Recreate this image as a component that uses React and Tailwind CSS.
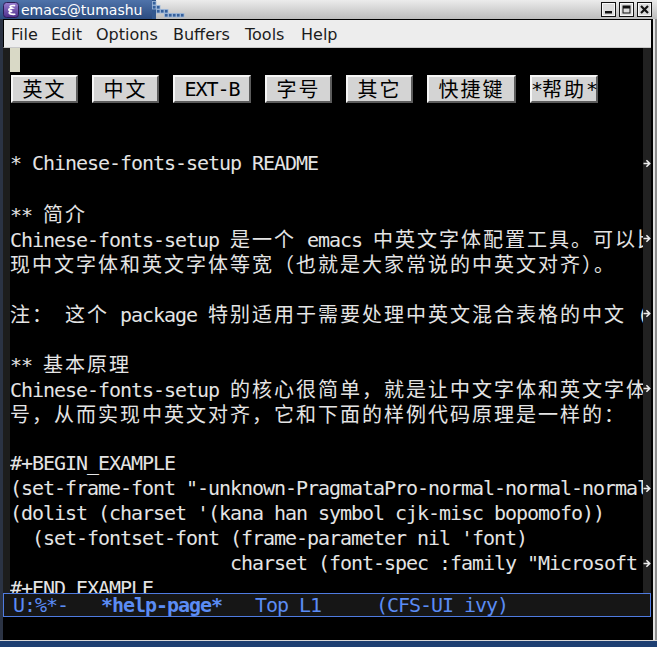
import React from "react";

const CJK = /([\u2E80-\u9FFF\u3000-\u303F\uFF00-\uFFEF]+)/;

// ascii cells are 11px, CJK cells are 22px (emacs double-width)
function Txt({ s }) {
  return s.split(CJK).map((part, i) =>
    i % 2 === 1 ? (
      <span key={i} className="font-['Noto_Sans_CJK_SC',sans-serif] tracking-[2px]">
        {part}
      </span>
    ) : (
      <span key={i}>{part}</span>
    )
  );
}

const lines = [
  { t: "* Chinese-fonts-setup README" + " ".repeat(40) + ":README:", arrow: true },
  { t: "" },
  { t: "** 简介" },
  { t: "Chinese-fonts-setup 是一个 emacs 中英文字体配置工具。可以比较方便的实", arrow: true },
  { t: "现中文字体和英文字体等宽（也就是大家常说的中英文对齐）。" },
  { t: "" },
  { t: "注： 这个 package 特别适用于需要处理中英文混合表格的中文 (org-mode) 用户。", arrow: true },
  { t: "" },
  { t: "** 基本原理" },
  { t: "Chinese-fonts-setup 的核心很简单，就是让中文字体和英文字体使用不同的字", arrow: true },
  { t: "号，从而实现中英文对齐，它和下面的样例代码原理是一样的：" },
  { t: "" },
  { t: "#+BEGIN_EXAMPLE" },
  { t: '(set-frame-font "-unknown-PragmataPro-normal-normal-normal-*-12-*-*-*-m-0-iso10646-1")', arrow: true },
  { t: "(dolist (charset '(kana han symbol cjk-misc bopomofo))" },
  { t: "  (set-fontset-font (frame-parameter nil 'font)" },
  { t: '                    charset (font-spec :family "Microsoft Yahei" :size 16)))', arrow: true },
  { t: "#+END_EXAMPLE" },
];

const buttons = [
  { label: "英文", w: "w-[67px]" },
  { label: "中文", w: "w-[67px]" },
  { label: "EXT-B", w: "w-[78px]" },
  { label: "字号", w: "w-[67px]" },
  { label: "其它", w: "w-[67px]" },
  { label: "快捷键", w: "w-[89px]" },
  { label: "*帮助*", w: "w-[68px]" },
];

const menu = [
  { label: "File", w: "w-[40px]" },
  { label: "Edit", w: "w-[45px]" },
  { label: "Options", w: "w-[77px]" },
  { label: "Buffers", w: "w-[72px]" },
  { label: "Tools", w: "w-[56px]" },
  { label: "Help", w: "" },
];

function EmacsIcon() {
  return (
    <svg width="16" height="16" viewBox="0 0 16 16" className="shrink-0">
      <defs>
        <linearGradient id="eg" x1="0" y1="0" x2="0" y2="1">
          <stop offset="0" stopColor="#9a7fd0" />
          <stop offset="1" stopColor="#4d2f8c" />
        </linearGradient>
      </defs>
      <rect x="0.5" y="0.5" width="15" height="15" rx="3" fill="url(#eg)" stroke="#2c1d55" />
      <path
        d="M11.5 3.6C7.5 3.2 5.2 4.6 9 6.1C4.8 6.8 4.6 8.6 9.2 9.1C4.4 10 5.2 12.6 11.8 12.3"
        fill="none"
        stroke="#fff"
        strokeWidth="1.6"
        strokeLinecap="round"
      />
    </svg>
  );
}

function Steps() {
  const sq = [
    [0, 1], [0, 5], [4, 5], [4, 9], [8, 9], [12, 9], [12, 13], [16, 13], [20, 13], [24, 13], [28, 13],
  ];
  return (
    <svg width="36" height="19" viewBox="0 0 36 19" className="shrink-0">
      <rect x="0" y="0" width="4" height="19" fill="#34598f" />
      {sq.map(([x, y], i) => (
        <rect key={i} x={x + 0.5} y={y + 0.5} width="3.5" height="3.5" fill="#35609c" stroke="#9fb8da" strokeWidth="0.8" />
      ))}
    </svg>
  );
}

function WinButton({ kind }) {
  return (
    <svg width="15" height="15" viewBox="0 0 15 15" className="shrink-0">
      <rect x="0.5" y="0.5" width="14" height="14" fill="#dcdcdc" stroke="#111" />
      <rect x="1.5" y="1.5" width="12" height="12" fill="none" stroke="#f7f7f7" />
      {kind === "min" && <rect x="4" y="9" width="7" height="2.5" fill="#111" />}
      {kind === "max" && (
        <g>
          <rect x="4" y="4" width="7" height="7" fill="none" stroke="#111" />
          <rect x="4" y="4" width="7" height="2.5" fill="#111" />
        </g>
      )}
      {kind === "close" && (
        <path d="M4 4L11 11M11 4L4 11" stroke="#111" strokeWidth="2.2" />
      )}
    </svg>
  );
}

function FringeArrow() {
  return (
    <svg width="8" height="9" viewBox="0 0 8 9">
      <path d="M0.5 4.5H6M3.4 1.2L6.7 4.5L3.4 7.8" fill="none" stroke="#ececec" strokeWidth="1.6" />
    </svg>
  );
}

export default function App() {
  return (
    <div className="w-[657px] h-[647px] overflow-hidden flex flex-col bg-[#2b3344] font-['DejaVu_Sans',sans-serif]">
      {/* title bar */}
      <div className="h-[19px] flex shrink-0">
        <div className="w-[152px] shrink-0 flex items-center gap-[2px] pl-[3px] bg-gradient-to-b from-[#4f73aa] to-[#2c4c80]">
          <EmacsIcon />
          <span className="text-white text-[14px] leading-none whitespace-nowrap">emacs@tumashu</span>
        </div>
        <div className="flex-1 min-w-0 flex items-center justify-end bg-gradient-to-b from-[#ececec] to-[#bcbcbc]">
          <div className="mr-auto">
            <Steps />
          </div>
          <div className="flex gap-[3px] pr-[5px]">
            <WinButton kind="min" />
            <WinButton kind="max" />
            <WinButton kind="close" />
          </div>
        </div>
      </div>

      {/* frame */}
      <div className="h-[621px] flex shrink-0">
        <div className="w-[3px] shrink-0 bg-[#2b3344]" />
        <div className="flex-1 min-w-0 flex flex-col border-t border-black">
          {/* menu bar */}
          <div className="h-[28px] shrink-0 bg-[#ededed] border-b border-l border-[#c8c8c8] border-l-black flex items-center pt-[3px] pl-[7px] text-[16px] text-[#1c1c1c]">
            {menu.map((m) => (
              <span key={m.label} className={`${m.w} shrink-0`}>
                {m.label}
              </span>
            ))}
          </div>

          {/* editor */}
          <div className="h-[545px] shrink-0 flex overflow-hidden font-['DejaVu_Sans_Mono',monospace] text-[20px] tracking-[-1.04px] text-[#e4e4e4]">
            <div className="w-[7px] shrink-0 bg-[#1d1d1d]" />
            <div className="flex-1 min-w-0 bg-black overflow-hidden">
              <div className="h-[25px]">
                <div className="w-[10px] h-[24px] bg-[#d9d9c6]" />
              </div>
              <div className="h-[31px] pt-[2px] pl-[1px] flex gap-[14px]">
                {buttons.map((b) => (
                  <div
                    key={b.label}
                    className={`${b.w} shrink-0 h-[28px] bg-[#d4d4d4] border-2 border-t-[#f6f6f6] border-l-[#f6f6f6] border-b-[#5c5c5c] border-r-[#5c5c5c] flex items-center justify-center text-black leading-none whitespace-nowrap`}
                  >
                    <Txt s={b.label} />
                  </div>
                ))}
              </div>
              <div className="h-[47px]" />
              {lines.map((l, i) => (
                <div key={i} className="h-[25px] leading-[25px] whitespace-pre overflow-hidden">
                  <Txt s={l.t} />
                </div>
              ))}
            </div>
            <div className="w-[8px] shrink-0 bg-[#212121]">
              <div className="h-[103px]" />
              {lines.map((l, i) => (
                <div key={i} className="h-[25px] flex items-center justify-end">
                  {l.arrow && <FringeArrow />}
                </div>
              ))}
            </div>
          </div>

          {/* mode line */}
          <div className="h-[24px] shrink-0 border border-[#4f7be0] bg-[#161616] pl-[9px] font-['DejaVu_Sans_Mono',monospace] text-[20px] tracking-[-1.04px] leading-[22px] text-[#5b8cf4] whitespace-pre overflow-hidden">
            {"U:%*-   "}
            <span className="font-bold">*help-page*</span>
            {"   Top L1     (CFS-UI ivy)"}
          </div>

          {/* echo area */}
          <div className="h-[23px] shrink-0 bg-black" />
        </div>
        <div className="w-[2px] shrink-0 bg-black" />
        <div className="w-[2px] shrink-0 bg-[#e2e2e2]" />
        <div className="w-[2px] shrink-0 bg-[#8e8e8e]" />
      </div>

      {/* bottom */}
      <div className="h-[1px] bg-[#d6d6d6] shrink-0" />
      <div className="flex-1 bg-[#1d3f72]" />
    </div>
  );
}
